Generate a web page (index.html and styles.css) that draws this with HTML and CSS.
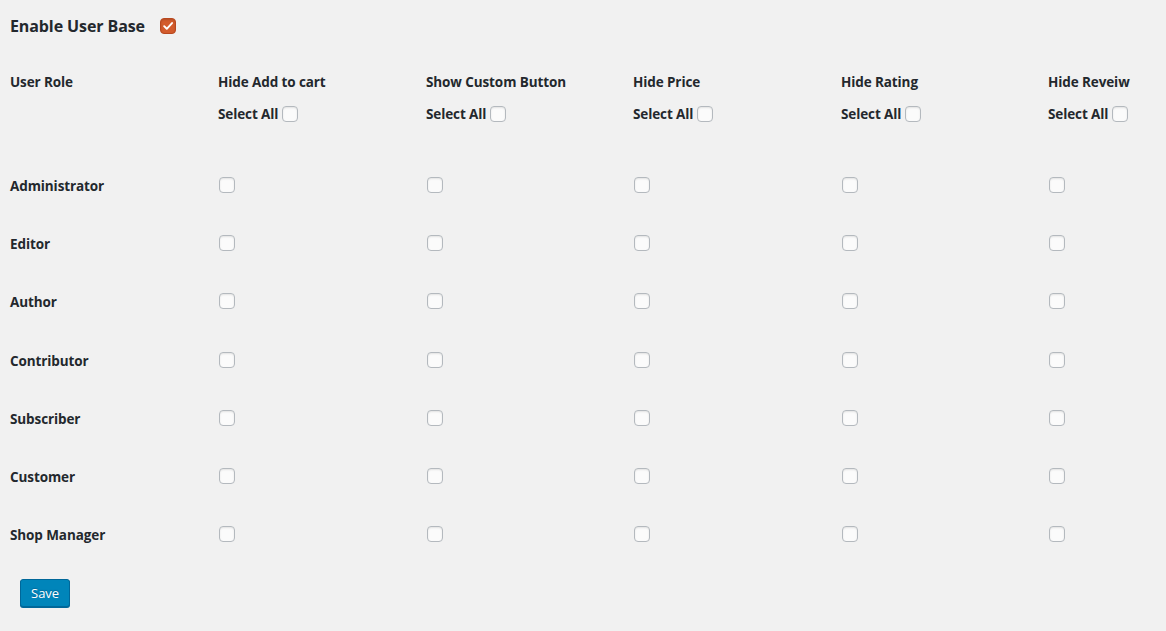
FILE: index.html
```html
<!DOCTYPE html>
<html>
<head>
<meta charset="utf-8">
<link rel="stylesheet" href="styles.css">
</head>
<body>
<div class="page">
  <div class="title-row">
    <h2 class="title">Enable User Base</h2>
    <span class="cb-orange"><svg viewBox="0 0 16 16" width="16" height="16"><path d="M3.6 8.2 L6.6 11.2 L12.6 4.6" fill="none" stroke="#fff" stroke-width="2.2" stroke-linecap="round" stroke-linejoin="round"/></svg></span>
  </div>
  <div class="grid">
    <div class="head">User Role</div>
    <div class="head">Hide Add to cart<div class="sel">Select All <input type="checkbox" class="cb"></div></div>
    <div class="head">Show Custom Button<div class="sel">Select All <input type="checkbox" class="cb"></div></div>
    <div class="head">Hide Price<div class="sel">Select All <input type="checkbox" class="cb"></div></div>
    <div class="head">Hide Rating<div class="sel">Select All <input type="checkbox" class="cb"></div></div>
    <div class="head">Hide Reveiw<div class="sel">Select All <input type="checkbox" class="cb"></div></div>

    <div class="role">Administrator</div><div class="cell"><input type="checkbox" class="cb"></div><div class="cell"><input type="checkbox" class="cb"></div><div class="cell"><input type="checkbox" class="cb"></div><div class="cell"><input type="checkbox" class="cb"></div><div class="cell"><input type="checkbox" class="cb"></div>
    <div class="role">Editor</div><div class="cell"><input type="checkbox" class="cb"></div><div class="cell"><input type="checkbox" class="cb"></div><div class="cell"><input type="checkbox" class="cb"></div><div class="cell"><input type="checkbox" class="cb"></div><div class="cell"><input type="checkbox" class="cb"></div>
    <div class="role">Author</div><div class="cell"><input type="checkbox" class="cb"></div><div class="cell"><input type="checkbox" class="cb"></div><div class="cell"><input type="checkbox" class="cb"></div><div class="cell"><input type="checkbox" class="cb"></div><div class="cell"><input type="checkbox" class="cb"></div>
    <div class="role">Contributor</div><div class="cell"><input type="checkbox" class="cb"></div><div class="cell"><input type="checkbox" class="cb"></div><div class="cell"><input type="checkbox" class="cb"></div><div class="cell"><input type="checkbox" class="cb"></div><div class="cell"><input type="checkbox" class="cb"></div>
    <div class="role">Subscriber</div><div class="cell"><input type="checkbox" class="cb"></div><div class="cell"><input type="checkbox" class="cb"></div><div class="cell"><input type="checkbox" class="cb"></div><div class="cell"><input type="checkbox" class="cb"></div><div class="cell"><input type="checkbox" class="cb"></div>
    <div class="role">Customer</div><div class="cell"><input type="checkbox" class="cb"></div><div class="cell"><input type="checkbox" class="cb"></div><div class="cell"><input type="checkbox" class="cb"></div><div class="cell"><input type="checkbox" class="cb"></div><div class="cell"><input type="checkbox" class="cb"></div>
    <div class="role">Shop Manager</div><div class="cell"><input type="checkbox" class="cb"></div><div class="cell"><input type="checkbox" class="cb"></div><div class="cell"><input type="checkbox" class="cb"></div><div class="cell"><input type="checkbox" class="cb"></div><div class="cell"><input type="checkbox" class="cb"></div>
  </div>
  <div class="actions"><button class="btn">Save</button></div>
</div>
</body>
</html>
```
FILE: styles.css
```css
html, body {
  margin: 0;
  padding: 0;
  background: #f1f1f1;
  overflow: hidden;
}
body {
  font-family: "Open Sans", "DejaVu Sans", sans-serif;
  color: #23282d;
  width: 1166px;
  height: 631px;
}
.page {
  padding: 0 0 0 10px;
}
.title-row {
  display: flex;
  align-items: center;
  height: 52px;
  gap: 15px;
}
.title {
  margin: 0;
  font-size: 16px;
  font-weight: 700;
  letter-spacing: -0.1px;
}
.cb-orange {
  width: 16px;
  height: 16px;
  border-radius: 4px;
  background: #d35b2c;
  border: 1px solid #b8481f;
  box-sizing: border-box;
  display: flex;
  align-items: center;
  justify-content: center;
  box-shadow: inset 0 1px 2px rgba(0,0,0,0.15);
}
.cb-orange svg { display: block; }
.grid {
  display: grid;
  grid-template-columns: 208px 208px 207px 208px 207px 1fr;
  grid-auto-rows: 58.2px;
  grid-template-rows: 105px;
  font-size: 13.5px;
  font-weight: 700;
  letter-spacing: -0.1px;
}
.head {
  padding-top: 20px;
  line-height: 20px;
}
.sel {
  margin-top: 12px;
  display: flex;
  align-items: center;
  gap: 4px;
}
.role {
  display: flex;
  align-items: center;
}
.cell {
  display: flex;
  align-items: center;
  padding-left: 1px;
  margin-top: -2px;
}
.cb {
  appearance: none;
  -webkit-appearance: none;
  margin: 0;
  width: 16px;
  height: 16px;
  border: 1px solid #b4b9be;
  border-radius: 4px;
  background: #fbfbfb;
  box-shadow: inset 0 1px 2px rgba(0,0,0,0.1);
  box-sizing: border-box;
}
.actions {
  padding: 15px 0 0 10px;
}
.btn {
  height: 28px;
  padding: 0 10px;
  font-family: "Open Sans", "DejaVu Sans", sans-serif;
  font-size: 13px;
  color: #fff;
  background: #0085ba;
  border: 1px solid #006799;
  border-radius: 3px;
  box-shadow: 0 1px 0 #006799;
  text-shadow: 0 -1px 1px #006799;
  cursor: pointer;
}
```
